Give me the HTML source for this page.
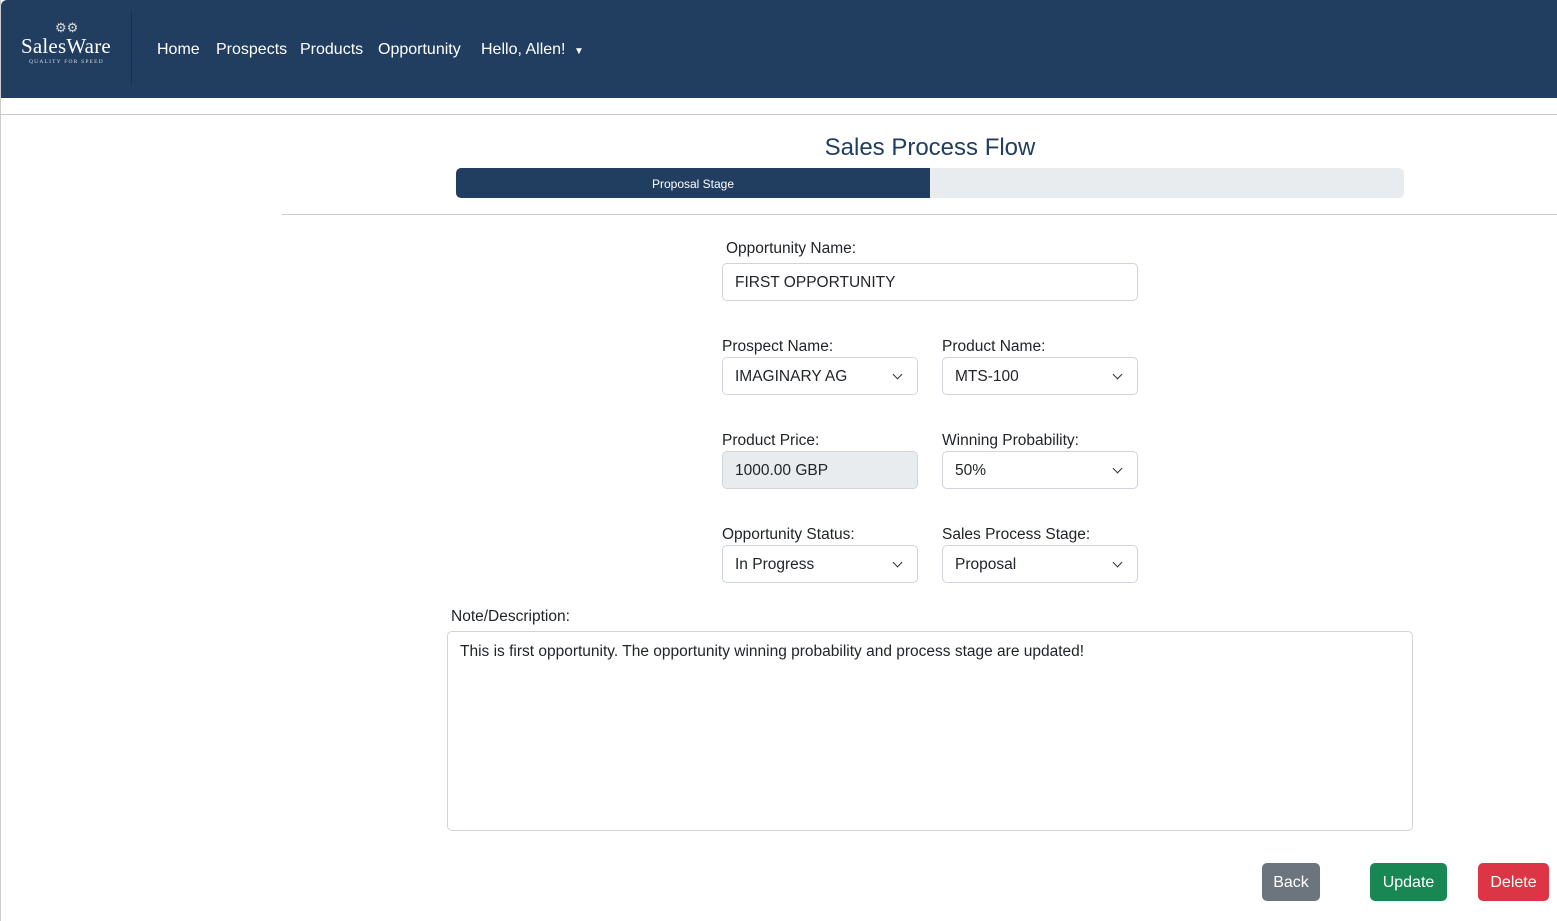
<!DOCTYPE html><html><head><style>
*{box-sizing:border-box;margin:0;padding:0}
body{width:1557px;height:921px;position:relative;background:#fff;font-family:"Liberation Sans",sans-serif;color:#212529;overflow:hidden}
.a{position:absolute}
.nav{left:1px;top:0;width:1556px;height:98px;background:#213d5f;border-top-left-radius:6px}
.nl{color:#fff;font-size:16px;top:41px}
.lbl{font-size:15.5px;color:#212529}
.inp{border:1px solid #ced4da;border-radius:5px;font-size:15.5px;padding:2px 12px 0;display:flex;align-items:center;background:#fff}
.sel::after{content:"";position:absolute;right:16px;top:13px;width:6px;height:6px;border-right:1.6px solid #333;border-bottom:1.6px solid #333;transform:rotate(45deg)}
.btn{color:#fff;font-size:16px;border-radius:5px;display:flex;align-items:center;justify-content:center;top:863px;height:38px;padding-top:2px}
</style></head><body>
<div class="a" style="left:0;top:0;width:1px;height:921px;background:#ccc"></div>
<div class="a nav"></div>
<div class="a" style="left:131px;top:11px;width:1px;height:74px;background:#1a2f4a"></div>
<div class="a" style="left:55px;top:20px;color:#ddd;font-size:13px">⚙⚙</div>
<div class="a" style="left:21px;top:34px;color:#fff;font-family:'Liberation Serif',serif;font-size:21px;letter-spacing:0.2px">SalesWare</div>
<div class="a" style="left:29px;top:59px;color:#ddd;font-family:'Liberation Serif',serif;font-size:5.5px;letter-spacing:1.2px">QUALITY FOR SPEED</div>
<div class="a nl" style="left:157px">Home</div>
<div class="a nl" style="left:216px">Prospects</div>
<div class="a nl" style="left:300px">Products</div>
<div class="a nl" style="left:378px">Opportunity</div>
<div class="a nl" style="left:481px">Hello, Allen! <span style="font-size:10px;margin-left:4px">▼</span></div>
<div class="a" style="left:0;top:114px;width:1557px;height:1px;background:#ccc"></div>
<div class="a" style="left:730px;width:400px;text-align:center;top:134px;font-size:24px;color:#213d5f">Sales Process Flow</div>
<div class="a" style="left:456px;top:168px;width:948px;height:30px;background:#e9ecef;border-radius:5px;overflow:hidden"><div style="width:474px;height:30px;background:#213d5f;color:#fff;font-size:12px;text-align:center;line-height:32px">Proposal Stage</div></div>
<div class="a" style="left:282px;top:214px;width:1275px;height:1px;background:#ccc"></div>
<div class="a lbl" style="left:726px;top:240px">Opportunity Name:</div>
<div class="a inp" style="left:722px;top:263px;width:416px;height:38px">FIRST OPPORTUNITY</div>
<div class="a lbl" style="left:722px;top:338px">Prospect Name:</div>
<div class="a inp sel" style="left:722px;top:357px;width:196px;height:38px">IMAGINARY AG</div>
<div class="a lbl" style="left:942px;top:338px">Product Name:</div>
<div class="a inp sel" style="left:942px;top:357px;width:196px;height:38px">MTS-100</div>
<div class="a lbl" style="left:722px;top:432px">Product Price:</div>
<div class="a inp" style="left:722px;top:451px;width:196px;height:38px;background:#e9ecef">1000.00 GBP</div>
<div class="a lbl" style="left:942px;top:432px">Winning Probability:</div>
<div class="a inp sel" style="left:942px;top:451px;width:196px;height:38px">50%</div>
<div class="a lbl" style="left:722px;top:526px">Opportunity Status:</div>
<div class="a inp sel" style="left:722px;top:545px;width:196px;height:38px">In Progress</div>
<div class="a lbl" style="left:942px;top:526px">Sales Process Stage:</div>
<div class="a inp sel" style="left:942px;top:545px;width:196px;height:38px">Proposal</div>
<div class="a lbl" style="left:451px;top:608px">Note/Description:</div>
<div class="a inp" style="left:447px;top:631px;width:966px;height:200px;align-items:flex-start;padding-top:11px">This is first opportunity. The opportunity winning probability and process stage are updated!</div>
<div class="a btn" style="left:1262px;width:58px;background:#6c757d">Back</div>
<div class="a btn" style="left:1370px;width:77px;background:#198754">Update</div>
<div class="a btn" style="left:1478px;width:71px;background:#dc3545">Delete</div>
</body></html>
